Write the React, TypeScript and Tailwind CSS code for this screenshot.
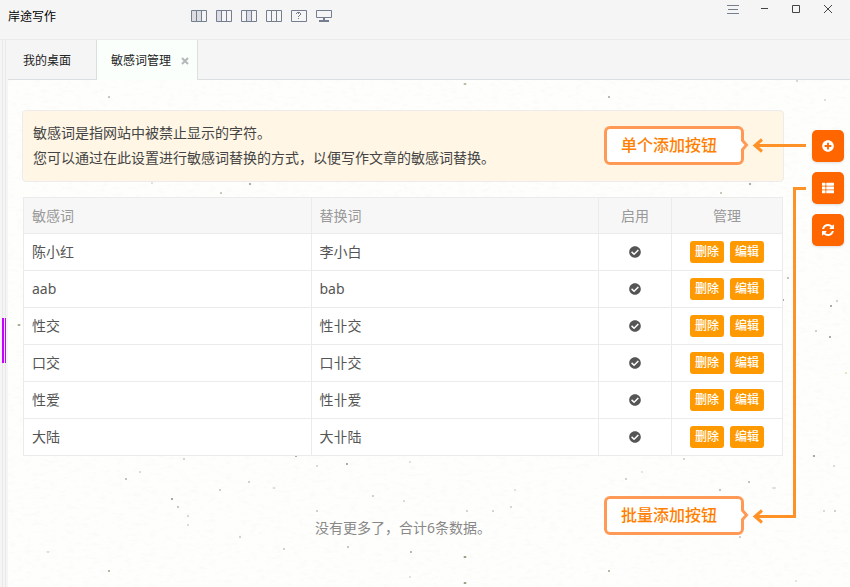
import React from "react";
import { FaCheckCircle, FaPlusCircle, FaThList } from "react-icons/fa";

const words = [
  { word: "陈小红", replace: "李小白" },
  { word: "aab", replace: "bab" },
  { word: "性交", replace: "性卝交" },
  { word: "口交", replace: "口卝交" },
  { word: "性爱", replace: "性卝爱" },
  { word: "大陆", replace: "大卝陆" },
];

// x, y, width, color
const specks: [number, number, number, string][] = [
  [101, 17, 2, "#a5a39b"],
  [457, 4, 3, "#a5a47e"],
  [601, 17, 2, "#8d8d86"],
  [789, 1, 2, "#bdbdb8"],
  [817, 20, 2, "#c9c9c5"],
  [242, 104, 2, "#77776f"],
  [213, 113, 2, "#a8a48f"],
  [144, 103, 2, "#cfcfca"],
  [742, 104, 2, "#77776f"],
  [713, 113, 2, "#a8a48f"],
  [11, 245, 3, "#8f8a6a"],
  [775, 220, 2, "#77776f"],
  [780, 198, 2, "#9a9a98"],
  [823, 226, 2, "#77776f"],
  [829, 221, 2, "#b9b9b4"],
  [822, 257, 2, "#77776f"],
  [808, 251, 2, "#b0b0ac"],
  [838, 293, 2, "#d5d3a6"],
  [806, 376, 2, "#6e6e68"],
  [826, 386, 2, "#c3c3c0"],
  [816, 431, 2, "#c3c3c0"],
  [827, 431, 2, "#b3b3b0"],
  [118, 399, 2, "#9a9a98"],
  [132, 392, 2, "#c3c3c0"],
  [176, 379, 2, "#b9b9a8"],
  [164, 419, 2, "#6e6e68"],
  [170, 427, 2, "#a3a39e"],
  [180, 436, 2, "#c3c3c0"],
  [180, 445, 2, "#c3c3c0"],
  [212, 410, 2, "#b3b3b0"],
  [241, 402, 2, "#b3b3b0"],
  [266, 408, 3, "#cfcfca"],
  [232, 457, 2, "#b3b3b0"],
  [276, 469, 2, "#b9b7a8"],
  [40, 472, 3, "#d5d3c6"],
  [101, 491, 2, "#8a866e"],
  [288, 376, 2, "#77776f"],
  [339, 384, 2, "#77776f"],
  [402, 382, 2, "#cfcfca"],
  [309, 386, 2, "#c3c3c0"],
  [365, 416, 2, "#b3b3b0"],
  [396, 421, 2, "#c8c6b8"],
  [309, 431, 2, "#b3b3b0"],
  [459, 431, 2, "#b9b9b4"],
  [485, 431, 2, "#b9b9b4"],
  [503, 427, 2, "#b9b9b4"],
  [507, 410, 2, "#cfcfca"],
  [340, 467, 2, "#a3a39e"],
  [403, 472, 2, "#8a8a84"],
  [457, 477, 3, "#7d7853"],
  [457, 503, 3, "#7d7853"],
  [402, 497, 2, "#cfcfca"],
  [618, 399, 2, "#b3b3b0"],
  [634, 392, 2, "#cfcfca"],
  [676, 379, 2, "#b9b9a8"],
  [741, 402, 2, "#9a9a98"],
  [712, 410, 2, "#a3a39e"],
  [766, 408, 4, "#d5d3c6"],
  [601, 491, 2, "#8a866e"],
  [732, 457, 2, "#b3b3b0"],
  [788, 501, 2, "#cfcfca"],
];

const Paper: React.FC = () => (
  <svg className="pointer-events-none absolute inset-0 h-full w-full" aria-hidden="true">
    <filter id="fibre" x="0" y="0" width="100%" height="100%">
      <feTurbulence type="fractalNoise" baseFrequency="0.12 0.3" numOctaves="4" seed="4" />
      <feColorMatrix values="0 0 0 0 0.82  0 0 0 0 0.8  0 0 0 0 0.72  1.6 0 0 0 -0.82" />
    </filter>
    <rect width="100%" height="100%" filter="url(#fibre)" opacity="0.3" />
    {specks.map(([x, y, w, color]) => (
      <ellipse key={`${x}-${y}`} cx={x} cy={y} rx={w / 2} ry="1" fill={color} opacity="0.8" />
    ))}
  </svg>
);

const RefreshIcon: React.FC = () => (
  <svg width="12" height="12" viewBox="0 0 1536 1536" fill="currentColor">
    <path d="M1511 928q0 5-1 7-64 268-268 434.500t-478 166.500q-146 0-282.500-55t-243.500-157l-129 129q-19 19-45 19t-45-19-19-45v-448q0-26 19-45t45-19h448q26 0 45 19t19 45-19 45l-137 137q71 66 161 102t187 36q134 0 250-65t186-179q11-17 53-117 8-23 30-23h192q13 0 22.500 9.500t9.500 22.500zM1536 128v448q0 26-19 45t-45 19h-448q-26 0-45-19t-19-45 19-45l138-138q-148-137-349-137-134 0-250 65t-186 179q-11 17-53 117-8 23-30 23h-199q-13 0-22.500-9.500t-9.500-22.500v-7q65-268 270-434.500t480-166.500q146 0 284 55.500t245 156.500l130-129q19-19 45-19t45 19 19 45z" />
  </svg>
);

// three-column layout icon, `shade` is the left edge and width of the filled part
const ColumnsIcon: React.FC<{ shade?: [number, number] }> = ({ shade }) => (
  <svg width="16" height="12" viewBox="0 0 16 12" fill="none" stroke="#747e8f">
    {shade && <rect x={shade[0]} y="1" width={shade[1]} height="10" fill="#dcdde2" stroke="none" />}
    <path d="M.5.5h15v11H.5zM5.500 1v10M10.500 1v10" />
  </svg>
);

const toolButtons = [
  { label: "左中栏", icon: <ColumnsIcon shade={[1, 9]} /> },
  { label: "左栏", icon: <ColumnsIcon shade={[1, 4]} /> },
  { label: "中栏", icon: <ColumnsIcon shade={[6, 4]} /> },
  { label: "三栏", icon: <ColumnsIcon /> },
  {
    label: "帮助",
    icon: (
      <svg width="16" height="12" viewBox="0 0 16 12" fill="none" stroke="#747e8f">
        <path d="M.5.5h15v11H.5z" />
        <path
          d="M6 2h3v1H6zM5 3h1v1H5zM7 3h1v1H7zM9 3h1v2H9zM8 5h1v1H8zM7 6h1v1H7zM7 8h1v1H7z"
          fill="#747e8f"
          stroke="none"
        />
      </svg>
    ),
  },
  {
    label: "屏幕",
    icon: (
      <svg width="16" height="12" viewBox="0 0 16 12" fill="none" stroke="#747e8f">
        <path d="M.5.5h15v7H.5z" />
        <path d="M8 8v2M3 11h10" strokeWidth="2" />
      </svg>
    ),
  },
];

const Callout: React.FC<{ children: React.ReactNode }> = ({ children }) => (
  <div className="relative h-[39px] w-[140px] rounded-md border-3 border-[#ff9a56] bg-white pl-3.5 text-base leading-8 font-medium text-[#ff8000]">
    {children}
    <svg className="absolute top-2 -right-2" width="10" height="16" viewBox="0 0 10 16" fill="none">
      <path d="M1 2h4v12H1z" fill="#fff" />
      <path d="M3.500 0v3.500L7.500 8l-4 4.500V16" fill="#fff" stroke="#ff9a56" strokeWidth="3" />
    </svg>
  </div>
);

const App: React.FC = () => {
  return (
    <div className="flex min-h-screen flex-col bg-[#f5f5f5] font-['Noto_Sans','Noto_Sans_CJK_SC',sans-serif] text-sm text-[#555]">
      <header className="flex h-10 items-start border-b border-[#ebebeb] pl-2">
        <h1 className="w-[183px] pt-2 text-xs leading-[18px] text-black">岸途写作</h1>
        <div className="flex gap-[9px] pt-2.5">
          {toolButtons.map((b) => (
            <button key={b.label} type="button" aria-label={b.label}>
              {b.icon}
            </button>
          ))}
        </div>
        <div className="ml-auto flex gap-5 pt-[5px] pr-[15px]">
          <button type="button" aria-label="菜单">
            <svg width="12" height="10" viewBox="0 0 12 10" stroke="#747e8f">
              <path d="M0 .5h12M1 4.500h10M0 8.500h12" />
            </svg>
          </button>
          <button type="button" aria-label="最小化">
            <svg width="12" height="10" viewBox="0 0 12 10" stroke="#444">
              <path d="M2 3.500h7" />
            </svg>
          </button>
          <button type="button" aria-label="最大化">
            <svg width="12" height="10" viewBox="0 0 12 10" fill="none" stroke="#444">
              <path d="M1.500 .5h7v7h-7z" />
            </svg>
          </button>
          <button type="button" aria-label="关闭">
            <svg width="12" height="10" viewBox="0 0 12 10" stroke="#444">
              <path d="M1 0l8 8M9 0l-8 8" />
            </svg>
          </button>
        </div>
      </header>

      <div className="flex flex-1">
        <div className="relative w-2 bg-[#f5f5f5] pl-0.5">
          <div className="h-full w-1 border-x border-[#e9e9e9]" />
          <div className="absolute top-[278px] left-0.5 flex h-[45px] gap-px">
            <span className="w-0.5 bg-[#c800ff]" />
            <span className="w-px bg-[#c800ff]" />
          </div>
        </div>

        <div className="flex flex-1 flex-col">
          <nav className="flex h-10 border-b border-[#dcdfe1] text-xs text-[#222]">
            <a href="#desk" className="flex w-[88px] items-center pt-0.5 pl-[15px]">
              我的桌面
            </a>
            <div className="-mb-px flex w-[102px] items-center justify-between border-x border-[#dcdfe1] bg-[#fafffc] pt-0.5 pr-2 pl-3.5">
              <a href="#words">敏感词管理</a>
              <button type="button" aria-label="关闭标签">
                <svg width="8" height="8" viewBox="0 0 8 8" stroke="#b4b8ba" strokeWidth="2">
                  <path d="M1 1l6 6M7 1L1 7" />
                </svg>
              </button>
            </div>
          </nav>

          <div className="relative flex flex-1 bg-[#fefefd]">
            <Paper />
            <main className="relative flex-1 pt-[30px] pl-3.5">
              <div className="h-[72px] rounded-sm border border-[#ececec] bg-[#fff6e5] px-2.5 py-[9px] leading-[25px] text-[#444]">
                <p>敏感词是指网站中被禁止显示的字符。</p>
                <p>您可以通过在此设置进行敏感词替换的方式，以便写作文章的敏感词替换。</p>
              </div>

              <div className="pt-[15px] pr-px pl-px">
                <table className="w-full table-fixed border-collapse bg-white">
                  <thead>
                    <tr className="h-9 bg-[#f7f7f7] text-[#999]">
                      <th className="border border-[#ebebeb] px-2 text-left font-normal">敏感词</th>
                      <th className="border border-[#ebebeb] px-2 text-left font-normal">替换词</th>
                      <th className="w-[73px] border border-[#ebebeb] text-center font-normal">启用</th>
                      <th className="w-[111px] border border-[#ebebeb] text-center font-normal">管理</th>
                    </tr>
                  </thead>
                  <tbody>
                    {words.map((item) => (
                      <tr key={item.word} className="h-[37px]">
                        <td className="border border-[#ebebeb] px-2">{item.word}</td>
                        <td className="border border-[#ebebeb] px-2">{item.replace}</td>
                        <td className="border border-[#ebebeb]">
                          <FaCheckCircle className="mx-auto text-xs" />
                        </td>
                        <td className="border border-[#ebebeb]">
                          <div className="flex justify-center gap-1.5 text-xs font-medium text-white">
                            <button type="button" className="h-[22px] w-[34px] rounded-[3px] bg-[#ff9900]">
                              删除
                            </button>
                            <button type="button" className="h-[22px] w-[34px] rounded-[3px] bg-[#ff9900]">
                              编辑
                            </button>
                          </div>
                        </td>
                      </tr>
                    ))}
                  </tbody>
                </table>
              </div>

              <p className="pt-[62px] text-center text-[#888]">没有更多了，合计6条数据。</p>

              <div className="absolute top-[46px] right-10">
                <Callout>单个添加按钮</Callout>
              </div>
              <div className="absolute top-[416px] right-10">
                <Callout>批量添加按钮</Callout>
              </div>
            </main>

            <aside className="relative flex w-[66px] flex-col items-end gap-2.5 pt-[50px] pr-1.5 text-xs text-white">
              <button type="button" aria-label="单个添加" className="flex size-8 items-center justify-center rounded-[5px] bg-[#ff6600] shadow">
                <FaPlusCircle />
              </button>
              <button type="button" aria-label="批量添加" className="flex size-8 items-center justify-center rounded-[5px] bg-[#ff6600] shadow">
                <FaThList />
              </button>
              <button type="button" aria-label="刷新" className="flex size-8 items-center justify-center rounded-[5px] bg-[#ff6600] shadow">
                <RefreshIcon />
              </button>
            </aside>

            {/* arrows from the buttons to the callouts */}
            <svg
              className="pointer-events-none absolute top-0 right-11"
              width="56"
              height="450"
              viewBox="0 0 56 450"
              fill="none"
              stroke="#ff9227"
              strokeWidth="3"
            >
              <path d="M56 65.500H6M12 59.500l-7 6 7 6" />
              <path d="M56 108.500H44.500v328H6M12 430.500l-7 6 7 6" />
            </svg>
          </div>
        </div>
      </div>
    </div>
  );
};

export default App;
